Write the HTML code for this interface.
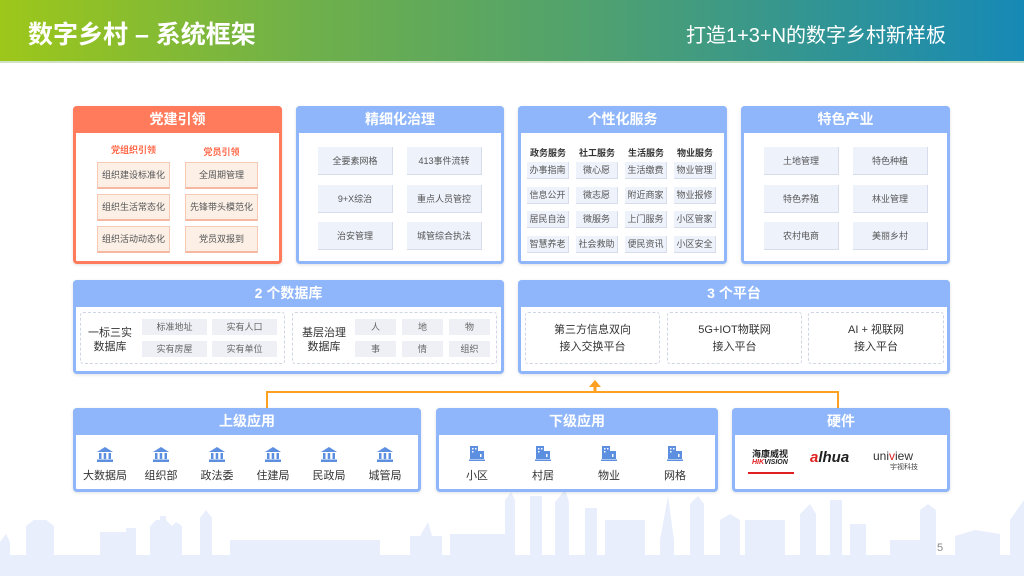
<!DOCTYPE html>
<html><head><meta charset="utf-8"><style>
*{margin:0;padding:0;box-sizing:border-box}
body{width:1024px;height:576px;position:relative;overflow:hidden;background:#fff;font-family:"Liberation Sans","Noto Sans CJK SC",sans-serif;color:#333}
.a{position:absolute}
.hdr{left:0;top:0;width:1024px;height:63px;background:linear-gradient(90deg,#9dc71a 0%,#6fb04a 30%,#4da072 60%,#1689b6 100%);border-bottom:2px solid #cfe3c4}
.card{position:absolute;border:3px solid #8fb6fb;border-radius:4px;background:#fff;box-shadow:0 1px 3px rgba(0,0,0,.12)}
.card .h{position:absolute;left:-3px;right:-3px;top:-3px;height:27px;background:#8fb6fb;color:#fff;font-size:14px;font-weight:bold;text-align:center;line-height:27px;border-radius:4px 4px 0 0}
.or{border-color:#ff7b5c}.or .h{background:#ff7b5c}
.b{position:absolute;background:#eef2fb;border-right:1px solid #d6dcea;border-bottom:1px solid #d6dcea;font-size:9px;color:#555;text-align:center}
.ob{background:#fbefe6;border:1px solid #f7c9b5;border-bottom:2px solid #f6b9a0}
.t{position:absolute;font-size:9px;text-align:center;white-space:nowrap}
.dash{position:absolute;border:1px dashed #cfd5e3;border-radius:3px}
.chip{position:absolute;background:#eef0f5;font-size:9px;color:#666;text-align:center;height:16px;line-height:16px}
.ic{position:absolute;width:16px;height:15px}
.lab{position:absolute;font-size:11px;color:#333;text-align:center;width:50px}
</style></head><body>
<div class="a hdr"></div>
<div class="a" style="left:28px;top:15px;color:#fff;font-size:25px;font-weight:bold;white-space:nowrap">数字乡村 – 系统框架</div>
<div class="a" style="left:686px;top:19px;color:#fff;font-size:20px;white-space:nowrap">打造1+3+N的数字乡村新样板</div>

<!-- skyline -->
<svg class="a" style="left:0;top:480px" width="1024" height="96" viewBox="0 0 1024 96">
<g fill="#e8eefc">
<rect x="0" y="75" width="1024" height="21"/>
<path d="M0 75V62l6-8 4 8V75M26 75V46l8-6 12 0 8 6V75M100 75V52h26v-4h10v27M150 75V46l6-6 4 0V36h6v4l6 6 4-4 6 4V75M200 75V38l6-8 6 8V75M230 75V60h150V75M410 75V56h10l8-14 4 14h10V75M450 75V54h60V75M505 75V20l6-8 4 8V75M530 75V16h12V75M555 75V22l10-12 4 12V75M585 75V28h12V75M605 75V40h40V75M660 75V60l8-44 6 44V75M690 75V24l8-8 6 8V75M720 75V40l10-6 10 6V75M745 75V40h40V75M800 75V34l10-10 6 10V75M830 75V20h12V75M850 75V44h16V75M890 75V60h40V75M920 75V30l8-6 8 6V75M955 75V56l20-6 25 4V75M1010 75V40l14-20V75"/>
</g></svg>
<div class="a" style="left:937px;top:542px;font-size:11px;color:#888">5</div>

<!-- Card 1 -->
<div class="card or" style="left:73px;top:106px;width:209px;height:158px"><div class="h">党建引领</div></div>
<div class="t" style="left:97px;top:143px;width:73px;color:#ff6a4a;font-weight:bold">党组织引领</div>
<div class="t" style="left:185px;top:145px;width:73px;color:#ff6a4a;font-weight:bold">党员引领</div>
<div class="b ob" style="left:97px;top:162px;width:73px;height:27px;line-height:25px">组织建设标准化</div>
<div class="b ob" style="left:97px;top:194px;width:73px;height:27px;line-height:25px">组织生活常态化</div>
<div class="b ob" style="left:97px;top:226px;width:73px;height:27px;line-height:25px">组织活动动态化</div>
<div class="b ob" style="left:185px;top:162px;width:73px;height:27px;line-height:25px">全周期管理</div>
<div class="b ob" style="left:185px;top:194px;width:73px;height:27px;line-height:25px">先锋带头模范化</div>
<div class="b ob" style="left:185px;top:226px;width:73px;height:27px;line-height:25px">党员双报到</div>

<!-- Card 2 -->
<div class="card" style="left:296px;top:106px;width:208px;height:158px"><div class="h">精细化治理</div></div>
<div class="b" style="left:318px;top:147px;width:75px;height:28px;line-height:28px">全要素网格</div>
<div class="b" style="left:407px;top:147px;width:75px;height:28px;line-height:28px">413事件流转</div>
<div class="b" style="left:318px;top:185px;width:75px;height:28px;line-height:28px">9+X综治</div>
<div class="b" style="left:407px;top:185px;width:75px;height:28px;line-height:28px">重点人员管控</div>
<div class="b" style="left:318px;top:222px;width:75px;height:28px;line-height:28px">治安管理</div>
<div class="b" style="left:407px;top:222px;width:75px;height:28px;line-height:28px">城管综合执法</div>

<!-- Card 3 -->
<div class="card" style="left:518px;top:106px;width:209px;height:158px"><div class="h">个性化服务</div></div>
<div class="t" style="left:527px;top:146px;width:42px;font-weight:bold">政务服务</div>
<div class="t" style="left:576px;top:146px;width:42px;font-weight:bold">社工服务</div>
<div class="t" style="left:625px;top:146px;width:42px;font-weight:bold">生活服务</div>
<div class="t" style="left:674px;top:146px;width:42px;font-weight:bold">物业服务</div>
<div class="b" style="left:527px;top:162px;width:42px;height:17px;line-height:16px">办事指南</div>
<div class="b" style="left:576px;top:162px;width:42px;height:17px;line-height:16px">微心愿</div>
<div class="b" style="left:625px;top:162px;width:42px;height:17px;line-height:16px">生活缴费</div>
<div class="b" style="left:674px;top:162px;width:42px;height:17px;line-height:16px">物业管理</div>
<div class="b" style="left:527px;top:187px;width:42px;height:17px;line-height:16px">信息公开</div>
<div class="b" style="left:576px;top:187px;width:42px;height:17px;line-height:16px">微志愿</div>
<div class="b" style="left:625px;top:187px;width:42px;height:17px;line-height:16px">附近商家</div>
<div class="b" style="left:674px;top:187px;width:42px;height:17px;line-height:16px">物业报修</div>
<div class="b" style="left:527px;top:211px;width:42px;height:17px;line-height:16px">居民自治</div>
<div class="b" style="left:576px;top:211px;width:42px;height:17px;line-height:16px">微服务</div>
<div class="b" style="left:625px;top:211px;width:42px;height:17px;line-height:16px">上门服务</div>
<div class="b" style="left:674px;top:211px;width:42px;height:17px;line-height:16px">小区管家</div>
<div class="b" style="left:527px;top:236px;width:42px;height:17px;line-height:16px">智慧养老</div>
<div class="b" style="left:576px;top:236px;width:42px;height:17px;line-height:16px">社会救助</div>
<div class="b" style="left:625px;top:236px;width:42px;height:17px;line-height:16px">便民资讯</div>
<div class="b" style="left:674px;top:236px;width:42px;height:17px;line-height:16px">小区安全</div>

<!-- Card 4 -->
<div class="card" style="left:741px;top:106px;width:209px;height:158px"><div class="h">特色产业</div></div>
<div class="b" style="left:764px;top:147px;width:75px;height:28px;line-height:28px">土地管理</div>
<div class="b" style="left:853px;top:147px;width:75px;height:28px;line-height:28px">特色种植</div>
<div class="b" style="left:764px;top:185px;width:75px;height:28px;line-height:28px">特色养殖</div>
<div class="b" style="left:853px;top:185px;width:75px;height:28px;line-height:28px">林业管理</div>
<div class="b" style="left:764px;top:222px;width:75px;height:28px;line-height:28px">农村电商</div>
<div class="b" style="left:853px;top:222px;width:75px;height:28px;line-height:28px">美丽乡村</div>

<!-- Row 2 -->
<div class="card" style="left:73px;top:280px;width:431px;height:94px"><div class="h">2 个数据库</div></div>
<div class="dash" style="left:80px;top:312px;width:205px;height:52px"></div>
<div class="dash" style="left:292px;top:312px;width:205px;height:52px"></div>
<div class="t" style="left:82px;top:326px;width:56px;font-size:11px;line-height:14px">一标三实<br>数据库</div>
<div class="chip" style="left:142px;top:319px;width:65px">标准地址</div>
<div class="chip" style="left:212px;top:319px;width:65px">实有人口</div>
<div class="chip" style="left:142px;top:341px;width:65px">实有房屋</div>
<div class="chip" style="left:212px;top:341px;width:65px">实有单位</div>
<div class="t" style="left:296px;top:326px;width:56px;font-size:11px;line-height:14px">基层治理<br>数据库</div>
<div class="chip" style="left:355px;top:319px;width:41px">人</div>
<div class="chip" style="left:402px;top:319px;width:41px">地</div>
<div class="chip" style="left:449px;top:319px;width:41px">物</div>
<div class="chip" style="left:355px;top:341px;width:41px">事</div>
<div class="chip" style="left:402px;top:341px;width:41px">情</div>
<div class="chip" style="left:449px;top:341px;width:41px">组织</div>

<div class="card" style="left:518px;top:280px;width:432px;height:94px"><div class="h">3 个平台</div></div>
<div class="dash" style="left:525px;top:312px;width:135px;height:52px"></div>
<div class="dash" style="left:667px;top:312px;width:135px;height:52px"></div>
<div class="dash" style="left:808px;top:312px;width:136px;height:52px"></div>
<div class="t" style="left:525px;top:322px;width:135px;font-size:11px;line-height:17px">第三方信息双向<br>接入交换平台</div>
<div class="t" style="left:667px;top:322px;width:135px;font-size:11px;line-height:17px">5G+IOT物联网<br>接入平台</div>
<div class="t" style="left:808px;top:322px;width:136px;font-size:11px;line-height:17px">AI + 视联网<br>接入平台</div>

<!-- connector -->
<svg class="a" style="left:260px;top:376px" width="590" height="34">
<path d="M7 34V16H578V34" fill="none" stroke="#ffa020" stroke-width="2"/>
<path d="M335 16V10" stroke="#ffa020" stroke-width="3"/>
<path d="M329 11L335 4L341 11Z" fill="#ffa020"/>
</svg>

<!-- Row 3 -->
<div class="card" style="left:73px;top:408px;width:348px;height:84px"><div class="h">上级应用</div></div>
<div class="card" style="left:436px;top:408px;width:282px;height:84px"><div class="h">下级应用</div></div>
<div class="card" style="left:732px;top:408px;width:218px;height:84px"><div class="h">硬件</div></div>

<svg width="0" height="0" style="position:absolute"><defs>
<g id="bank" fill="#5d8fe0"><path d="M0 5L8 0L16 5Z"/><rect x="2" y="6" width="2.5" height="6"/><rect x="6.7" y="6" width="2.5" height="6"/><rect x="11.5" y="6" width="2.5" height="6"/><rect x="0" y="12.5" width="16" height="2.5"/></g>
<g id="bld" fill="#5d8fe0"><rect x="1" y="0" width="8" height="13"/><rect x="8" y="5" width="7" height="8"/><rect x="0" y="13.5" width="16" height="1.5"/><rect x="3" y="2" width="1.5" height="1.5" fill="#fff"/><rect x="6" y="2" width="1.5" height="1.5" fill="#fff"/><rect x="3" y="5" width="1.5" height="1.5" fill="#fff"/><rect x="11" y="8" width="1.5" height="3" fill="#fff"/></g>
</defs></svg>
<svg class="ic" style="left:97px;top:447px"><use href="#bank"/></svg>
<svg class="ic" style="left:153px;top:447px"><use href="#bank"/></svg>
<svg class="ic" style="left:209px;top:447px"><use href="#bank"/></svg>
<svg class="ic" style="left:265px;top:447px"><use href="#bank"/></svg>
<svg class="ic" style="left:321px;top:447px"><use href="#bank"/></svg>
<svg class="ic" style="left:377px;top:447px"><use href="#bank"/></svg>
<div class="lab" style="left:80px;top:467px">大数据局</div>
<div class="lab" style="left:136px;top:467px">组织部</div>
<div class="lab" style="left:192px;top:467px">政法委</div>
<div class="lab" style="left:248px;top:467px">住建局</div>
<div class="lab" style="left:304px;top:467px">民政局</div>
<div class="lab" style="left:360px;top:467px">城管局</div>

<svg class="ic" style="left:469px;top:446px"><use href="#bld"/></svg>
<svg class="ic" style="left:535px;top:446px"><use href="#bld"/></svg>
<svg class="ic" style="left:601px;top:446px"><use href="#bld"/></svg>
<svg class="ic" style="left:667px;top:446px"><use href="#bld"/></svg>
<div class="lab" style="left:452px;top:467px">小区</div>
<div class="lab" style="left:518px;top:467px">村居</div>
<div class="lab" style="left:584px;top:467px">物业</div>
<div class="lab" style="left:650px;top:467px">网格</div>

<div class="a" style="left:752px;top:447px;font-size:9px;font-weight:bold;color:#222">海康威视</div>
<div class="a" style="left:752px;top:459px;font-size:7px;font-weight:bold;font-style:italic;color:#222"><span style="color:#e02020">HIK</span>VISION</div>
<div class="a" style="left:748px;top:472px;width:46px;height:2px;background:#e02020"></div>
<div class="a" style="left:810px;top:449px;font-size:15px;font-weight:bold;font-style:italic;color:#222"><span style="color:#e02020">a</span>lhua</div>
<div class="a" style="left:873px;top:449px;font-size:12px;color:#333">uni<span style="color:#e02020">v</span>iew</div>
<div class="a" style="left:890px;top:462px;font-size:7px;color:#444">宇视科技</div>
</body></html>
